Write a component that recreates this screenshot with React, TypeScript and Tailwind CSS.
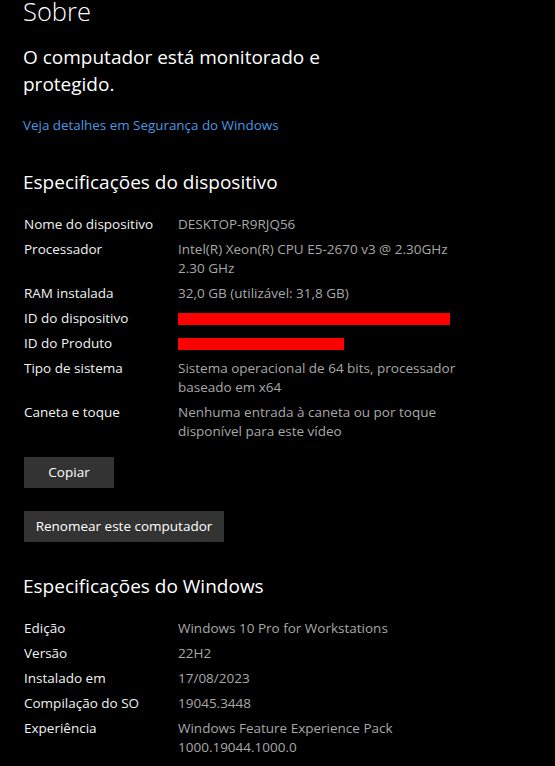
import React from 'react'

type Row = { label: string; value?: string[]; redacted?: number }

const deviceRows: Row[] = [
  { label: 'Nome do dispositivo', value: ['DESKTOP-R9RJQ56'] },
  { label: 'Processador', value: ['Intel(R) Xeon(R) CPU E5-2670 v3 @ 2.30GHz', '2.30 GHz'] },
  { label: 'RAM instalada', value: ['32,0 GB (utilizável: 31,8 GB)'] },
  { label: 'ID do dispositivo', redacted: 272 },
  { label: 'ID do Produto', redacted: 166 },
  { label: 'Tipo de sistema', value: ['Sistema operacional de 64 bits, processador', 'baseado em x64'] },
  { label: 'Caneta e toque', value: ['Nenhuma entrada à caneta ou por toque', 'disponível para este vídeo'] },
]

const windowsRows: Row[] = [
  { label: 'Edição', value: ['Windows 10 Pro for Workstations'] },
  { label: 'Versão', value: ['22H2'] },
  { label: 'Instalado em', value: ['17/08/2023'] },
  { label: 'Compilação do SO', value: ['19045.3448'] },
  { label: 'Experiência', value: ['Windows Feature Experience Pack', '1000.19044.1000.0'] },
]

const SpecRow = ({ row }: { row: Row }) => (
  <div className="flex text-[13.5px] leading-[19px]">
    <div className="w-[154px] shrink-0 text-[#f2f2f2]">{row.label}</div>
    <div className="text-[#a8a8a8]">
      {row.redacted ? (
        <div className="h-[19px] flex items-center">
          <div className="h-[12px] bg-[#ff0000]" style={{ width: row.redacted }} />
        </div>
      ) : (
        row.value!.map((v) => <div key={v}>{v}</div>)
      )}
    </div>
  </div>
)

export default function App() {
  return (
    <div className="w-[555px] h-[766px] overflow-hidden bg-black pl-[24px] font-['Open_Sans',sans-serif] text-white">
      {/* Title */}
      <h1 className="-mt-[5px] -ml-[1px] text-[25.5px] leading-[32px] font-light">Sobre</h1>

      {/* Security status */}
      <p className="mt-[17px] -ml-[1px] text-[19px] leading-[27px]">
        O computador está monitorado e<br />protegido.
      </p>
      <a className="block mt-[18px] -ml-[1px] text-[13.4px] leading-[18px] text-[#4a98e0]">
        Veja detalhes em Segurança do Windows
      </a>

      {/* Device specs */}
      <h2 className="mt-[35px] -ml-[1px] text-[19px] leading-[27px]">Especificações do dispositivo</h2>
      <div className="mt-[19px] flex flex-col gap-[6px]">
        {deviceRows.map((r) => (
          <SpecRow key={r.label} row={r} />
        ))}
      </div>

      <div className="mt-[16px] flex flex-col items-start gap-[23px]">
        <button className="w-[90px] h-[31px] bg-[#333333] text-[13.5px] text-white">Copiar</button>
        <button className="w-[200px] h-[31px] bg-[#333333] text-[13.5px] text-white">
          Renomear este computador
        </button>
      </div>

      {/* Windows specs */}
      <h2 className="mt-[31px] -ml-[1px] text-[19px] leading-[27px]">Especificações do Windows</h2>
      <div className="mt-[19px] flex flex-col gap-[6px]">
        {windowsRows.map((r) => (
          <SpecRow key={r.label} row={r} />
        ))}
      </div>
    </div>
  )
}
